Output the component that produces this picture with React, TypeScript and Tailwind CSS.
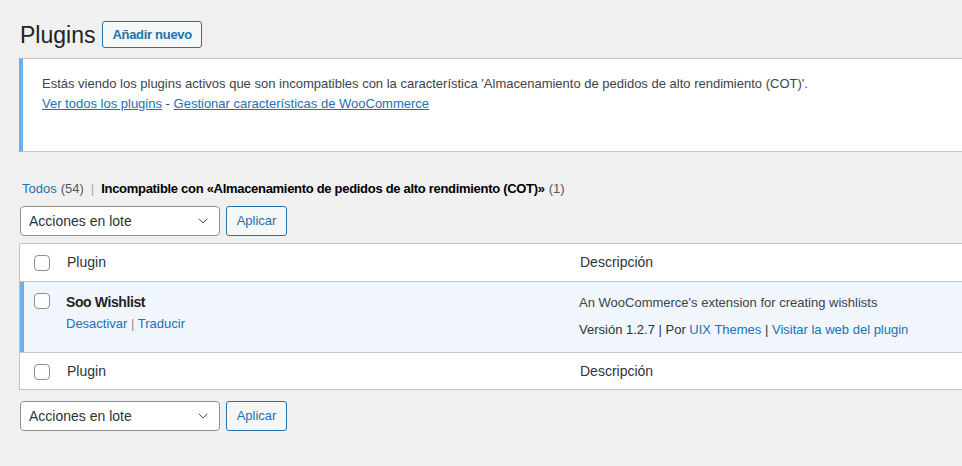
import React from 'react'
import { ChevronDown } from 'lucide-react'

const Checkbox: React.FC = () => (
  <span className="block w-4 h-4 rounded-[4px] border border-[#8c8f94] bg-white" />
)

const BulkActions: React.FC<{ className?: string }> = ({ className = '' }) => (
  <div className={`flex items-center gap-[6px] pl-px ${className}`}>
    <div className="flex items-center justify-between w-[200px] h-[30px] pl-[8px] pr-[8px] bg-white border border-[#8c8f94] rounded-[4px] text-[14px] text-[#2c3338]">
      <span>Acciones en lote</span>
      <ChevronDown className="w-4 h-4 text-[#50575e]" strokeWidth={1.5} />
    </div>
    <button className="w-[61px] h-[30px] bg-[#f6f7f7] border border-[#2271b1] rounded-[3px] text-[13px] text-[#2271b1]">
      Aplicar
    </button>
  </div>
)

const App: React.FC = () => {
  return (
    <div className="min-h-screen w-full overflow-hidden bg-[#f0f0f1] text-[13px] text-[#3c434a] font-['Liberation_Sans',Arial,sans-serif]">
      <div className="w-[1100px] pl-[19px] pt-[20px]">
        {/* Title */}
        <div className="flex items-start pl-px">
          <h1 className="text-[23px] leading-[30px] text-[#1d2327]">Plugins</h1>
          <button className="ml-[7px] mt-px h-[27px] px-[9px] bg-[#f6f7f7] border border-[#2271b1] rounded-[3px] text-[13px] font-semibold tracking-[-0.3px] text-[#2271b1]">
            Añadir nuevo
          </button>
        </div>

        {/* Notice */}
        <div className="mt-[8px] bg-white border border-[#c3c4c7] border-l-4 border-l-[#72aee6] pl-[19px] pt-[15px] pb-[38px] leading-[19.5px]">
          <p>
            Estás viendo los plugins activos que son incompatibles con la característica 'Almacenamiento de pedidos de alto rendimiento (COT)'.
          </p>
          <p>
            <a className="text-[#2271b1] underline">Ver todos los plugins</a> -{' '}
            <a className="text-[#2271b1] underline">Gestionar características de WooCommerce</a>
          </p>
        </div>

        {/* Filters */}
        <div className="mt-[24px] h-[26px] flex items-center pl-[3px] text-[#50575e]">
          <a className="text-[#2271b1]">Todos</a>
          <span className="ml-1">(54)</span>
          <span className="mx-[7px] text-[#a7aaad]">|</span>
          <span className="font-semibold tracking-[-0.3px] text-black">Incompatible con «Almacenamiento de pedidos de alto rendimiento (COT)»</span>
          <span className="ml-1 text-[#50575e]">(1)</span>
        </div>

        <BulkActions className="mt-[4px]" />

        {/* Table */}
        <div className="mt-[7px] bg-white border border-[#c3c4c7]">
          <div className="flex h-[38px] items-center border-b border-[#c3c4c7] text-[14px] text-[#2c3338]">
            <div className="w-[37px] pl-[14px]"><Checkbox /></div>
            <div className="w-[513px] pl-[10px]">Plugin</div>
            <div className="pl-[10px]">Descripción</div>
          </div>

          <div className="flex h-[71px] bg-[#f0f6fc] border-b border-[#c3c4c7]">
            <div className="w-[37px] pl-[10px] pt-[11px] border-l-4 border-[#72aee6]"><Checkbox /></div>
            <div className="w-[513px] pl-[9px] pt-[10px]">
              <div className="text-[14px] leading-[20px] font-semibold tracking-[-0.4px] text-[#1d2327] mb-[2px]">Soo Wishlist</div>
              <div className="leading-[19.5px]">
                <a className="text-[#2271b1]">Desactivar</a>
                <span className="text-[#8c8f94]"> | </span>
                <a className="text-[#2271b1]">Traducir</a>
              </div>
            </div>
            <div className="pl-[9px] pt-[11px] leading-[19.5px]">
              <p className="mb-[7.5px]">An WooCommerce's extension for creating wishlists</p>
              <p className="text-[#2c3338]">
                Versión 1.2.7 | Por <a className="text-[#2271b1]">UIX Themes</a> |{' '}
                <a className="text-[#2271b1]">Visitar la web del plugin</a>
              </p>
            </div>
          </div>

          <div className="flex h-[36px] items-center pt-px text-[14px] text-[#2c3338]">
            <div className="w-[37px] pl-[14px]"><Checkbox /></div>
            <div className="w-[513px] pl-[10px]">Plugin</div>
            <div className="pl-[10px]">Descripción</div>
          </div>
        </div>

        <BulkActions className="mt-[11px]" />
      </div>
    </div>
  )
}

export default App
